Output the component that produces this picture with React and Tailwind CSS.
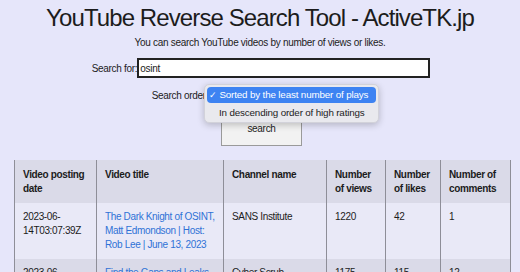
const rows = [
  {
    date: "2023-06-14T03:07:39Z",
    title: "The Dark Knight of OSINT, Matt Edmondson | Host: Rob Lee | June 13, 2023",
    channel: "SANS Institute",
    views: "1220",
    likes: "42",
    comments: "1",
  },
  {
    date: "2023-06-13T15:20:11Z",
    title: "Find the Gaps and Leaks",
    channel: "Cyber Scrub",
    views: "1175",
    likes: "115",
    comments: "12",
  },
];

const headers = [
  "Video posting date",
  "Video title",
  "Channel name",
  "Number of views",
  "Number of likes",
  "Number of comments",
];

const App = () => {
  return (
    <div className="min-h-screen bg-[#e6e6fa] text-[#1c1c1c] overflow-hidden font-['Liberation_Sans',Arial,sans-serif]">
      <h1 className="text-center text-[24px] leading-[28px] font-normal pt-[4px] tracking-[-0.9px]">
        YouTube Reverse Search Tool - ActiveTK.jp
      </h1>
      <p className="text-center text-[10px] leading-[14px] mt-[4px] tracking-[-0.3px]">
        You can search YouTube videos by number of views or likes.
      </p>

      <div className="flex justify-center items-center mt-[8px] text-[10px] tracking-[-0.3px]">
        <span className="pl-[2px]">Search for:</span>
        <input
          defaultValue="osint"
          className="w-[293px] h-[20px] bg-white border-2 border-[#222] px-[1px] text-[10px] outline-none"
        />
      </div>

      <div className="relative flex justify-center items-center mt-[8px] h-[18px] text-[10px] tracking-[-0.3px]">
        <span>Search order:</span>
        <span className="w-[160px]"></span>
        <div className="absolute left-[204px] top-[-2px] w-[175px] rounded-[5px] bg-[#e9e9ee] shadow-[0_2px_7px_rgba(0,0,0,0.22)] border border-[#d2d2da] p-[2px] z-10 text-[9.8px] tracking-[-0.15px] whitespace-nowrap">
          <div className="rounded-[4px] bg-[#3d83f2] text-white h-[16px] leading-[16px] pl-[2px]">
            <span className="text-[9px]">✓</span> Sorted by the least number of plays
          </div>
          <div className="h-[15px] leading-[15px] mt-[2px] pl-[12px]">
            In descending order of high ratings
          </div>
        </div>
      </div>

      <div className="flex justify-center mt-[7px]">
        <button className="w-[81px] h-[35px] bg-[#f2f2f2] border border-[#9a9a9a] text-[10px] tracking-[-0.3px] ml-[3px]">
          search
        </button>
      </div>

      <table className="ml-[14px] mt-[14px] w-[496px] table-fixed border-collapse text-[10px] leading-[14px] tracking-[-0.35px] text-left">
        <colgroup>
          <col className="w-[82px]" />
          <col className="w-[127px]" />
          <col className="w-[103px]" />
          <col className="w-[59px]" />
          <col className="w-[55px]" />
          <col className="w-[70px]" />
        </colgroup>
        <thead>
          <tr className="bg-[#dadae8]">
            {headers.map((h) => (
              <th key={h} className="align-top font-bold border-x border-[#8e8e98] pl-[8px] pr-[6px] pt-[8px] pb-[7px]">
                {h}
              </th>
            ))}
          </tr>
        </thead>
        <tbody>
          {rows.map((r, i) => (
            <tr key={i} className={i % 2 === 0 ? "bg-[#e9e9f7]" : "bg-[#dadae8]"}>
              <td className="align-top border-x border-[#8e8e98] pl-[8px] pr-[6px] py-[7px]">{r.date}</td>
              <td className="align-top border-x border-[#8e8e98] pl-[8px] pr-[6px] py-[7px]">
                <a href="#" className="text-[#2f72d6]">{r.title}</a>
              </td>
              <td className="align-top border-x border-[#8e8e98] pl-[8px] pr-[6px] py-[7px]">{r.channel}</td>
              <td className="align-top border-x border-[#8e8e98] pl-[8px] pr-[6px] py-[7px]">{r.views}</td>
              <td className="align-top border-x border-[#8e8e98] pl-[8px] pr-[6px] py-[7px]">{r.likes}</td>
              <td className="align-top border-x border-[#8e8e98] pl-[8px] pr-[6px] py-[7px]">{r.comments}</td>
            </tr>
          ))}
        </tbody>
      </table>
    </div>
  );
};

export default App;
